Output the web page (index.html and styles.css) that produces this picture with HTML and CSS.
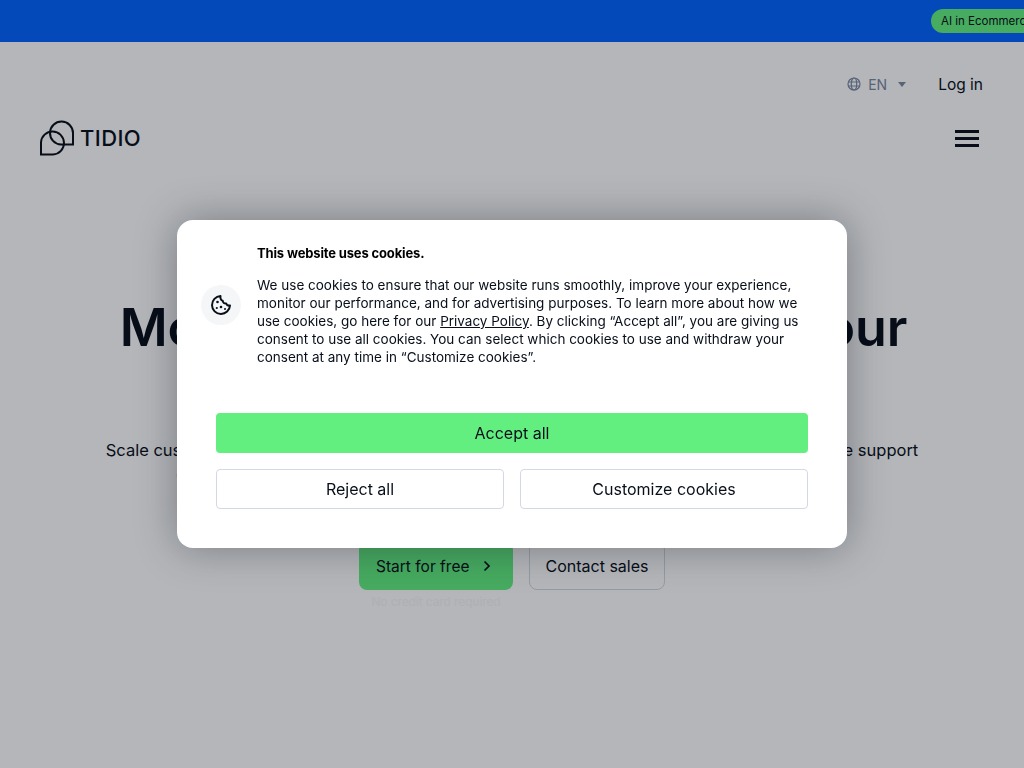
FILE: index.html
```html
<!DOCTYPE html>
<html lang="en">
<head>
<meta charset="utf-8">
<title>Tidio</title>
<link rel="stylesheet" href="styles.css">
</head>
<body>
<div class="page">
  <div class="topbar"><span class="pill">AI in Ecommerce Report 2025</span></div>
  <div class="utility">
    <span class="lang">
      <svg class="globe" width="14" height="14" viewBox="0 0 14 14" fill="none" stroke="currentColor" stroke-width="1.2"><circle cx="7" cy="7" r="6"/><ellipse cx="7" cy="7" rx="2.7" ry="6"/><path d="M1.2 5h11.6M1.2 9h11.6"/></svg>
      <span class="lang-code">EN</span>
      <span class="caret"></span>
    </span>
    <a class="login">Log in</a>
  </div>
  <header class="nav">
    <span class="logo">
      <svg width="35" height="36" viewBox="0 0 35 36" fill="none" stroke="#080f1a" stroke-width="2"><path d="M33 24.500H21A11.500 11.500 0 1 1 33 13Z"/><path d="M1 34.500V22.500A11.500 11.500 0 1 1 13 34.500Z"/></svg>
      <span class="logo-text">TIDIO</span>
    </span>
    <span class="burger"><i></i><i></i><i></i></span>
  </header>
  <main class="hero">
    <h1>More sales, less work with your</h1>
    <p>Scale customer service with AI agents that answer and resolve every request, and give your live support<br>quickly and effortlessly, so your team can focus on growing your business with a plan.</p>
    <div class="cta">
      <div class="start-col">
        <a class="btn-start">Start for free
          <svg width="10" height="12" viewBox="0 0 10 12" fill="none" stroke="currentColor" stroke-width="1.700"><path d="M2.500 1.500 7 6l-4.500 4.500"/></svg>
        </a>
        <div class="note">No credit card required</div>
      </div>
      <a class="btn-contact">Contact sales</a>
    </div>
  </main>
</div>
<div class="overlay">
  <section class="modal">
    <div class="modal-body">
      <span class="cookie">
        <svg width="22" height="22" viewBox="0 0 22 22" fill="none" stroke="#080f1a" stroke-width="2" stroke-linejoin="round"><path d="M10.500 2a9 9 0 1 0 9.500 9.500c-1.800.4-3.300-.4-3.800-2-1.800.3-3.400-.9-3.500-2.700C11 6.500 10 4 10.500 2Z"/><circle cx="7.500" cy="8" r="1.300" fill="#080f1a" stroke="none"/><circle cx="11" cy="13" r="1.300" fill="#080f1a" stroke="none"/><circle cx="6.800" cy="14" r="1.100" fill="#080f1a" stroke="none"/><circle cx="15" cy="15" r="1" fill="#080f1a" stroke="none"/></svg>
      </span>
      <div class="copy">
        <h2>This website uses cookies.</h2>
        <p>We use cookies to ensure that our website runs smoothly, improve your experience, monitor our performance, and for advertising purposes. To learn more about how we use cookies, go here for our <a class="policy">Privacy Policy</a>. By clicking “Accept all”, you are giving us consent to use all cookies. You can select which cookies to use and withdraw your consent at any time in “Customize cookies”.</p>
      </div>
    </div>
    <div class="actions">
      <button class="accept">Accept all</button>
      <div class="secondary">
        <button class="outline">Reject all</button>
        <button class="outline">Customize cookies</button>
      </div>
    </div>
  </section>
</div>
</body>
</html>
```
FILE: styles.css
```css
* { box-sizing: border-box; }
html, body { margin: 0; height: 100%; }
body {
  font-family: "Inter", "Lato", "Liberation Sans", sans-serif;
  color: #080f1a;
  background: #fff;
  overflow: hidden;
}
.page { height: 768px; overflow: hidden; }
.topbar {
  height: 42px;
  background: #0263ff;
  padding: 9px 0 0 931px;
  white-space: nowrap;
  overflow: hidden;
}
.pill {
  display: inline-block;
  height: 24px;
  line-height: 24px;
  padding: 0 12px 0 10px;
  border-radius: 12px 0 0 12px;
  background: #63ef80;
  font-size: 11.500px;
}
.utility {
  display: flex;
  justify-content: flex-end;
  align-items: center;
  height: 24px;
  margin-top: 30px;
  padding-right: 41px;
}
.lang { display: flex; align-items: center; color: #7c88a3; font-size: 14px; }
.globe { margin-right: 7px; }
.caret {
  width: 0; height: 0;
  margin-left: 11px;
  border: 4px solid transparent;
  border-top: 5px solid #7c88a3;
  border-bottom: 0;
}
.login { margin-left: 32px; font-size: 15.500px; }
.nav {
  display: flex;
  justify-content: space-between;
  align-items: center;
  height: 36px;
  margin-top: 24px;
  padding: 0 45px 0 40px;
}
.logo { display: flex; align-items: center; }
.logo-text { margin-left: 5px; font-size: 22px; font-weight: 500; letter-spacing: 0.400px; }
.burger { display: flex; flex-direction: column; gap: 4px; width: 24px; }
.burger i { display: block; height: 3px; background: #080f1a; }
.hero { text-align: center; }
.hero h1 {
  margin: 140px 0 0;
  padding-left: 3px;
  font-size: 52px;
  line-height: 64px;
  font-weight: 600;
  letter-spacing: -0.100px;
  white-space: nowrap;
}
.hero p { margin: 78px 0 0; font-size: 16.500px; line-height: 24px; white-space: nowrap; }
.cta { display: flex; justify-content: center; align-items: flex-start; gap: 16px; margin-top: 56px; }
.start-col { width: 154px; }
.btn-start, .btn-contact {
  display: flex;
  align-items: center;
  height: 48px;
  border-radius: 8px;
  font-size: 16px;
}
.btn-start { padding-left: 17px; gap: 13px; background: #63ef80; font-size: 15.500px; }
.btn-contact { width: 136px; justify-content: center; border: 1px solid #d3d9e2; }
.note { margin-top: 4px; font-size: 11.800px; line-height: 16px; color: #f6f7f8; }
.overlay {
  position: fixed;
  inset: 0;
  background: rgba(8, 12, 22, 0.3);
  display: flex;
  justify-content: center;
  padding-top: 220px;
}
.modal {
  width: 670px;
  height: 328px;
  padding: 24px 39px 39px 24px;
  background: #fff;
  border-radius: 16px;
  box-shadow: 0 0 40px rgba(8, 12, 22, 0.35);
}
.modal-body { display: flex; align-items: center; gap: 16px; }
.cookie {
  display: flex;
  align-items: center;
  justify-content: center;
  flex: none;
  width: 40px;
  height: 40px;
  border-radius: 50%;
  background: #f5f6f8;
}
.copy { flex: 1; }
.copy h2 { margin: 0; font-size: 13px; line-height: 18px; font-weight: 700; letter-spacing: -0.150px; color: #000; }
.copy p { margin: 14px 0 0; font-size: 13.500px; line-height: 18px; }
.policy { text-decoration: underline; }
.actions { margin: 47px 0 0 15px; display: flex; flex-direction: column; gap: 16px; }
button { font: inherit; font-size: 16px; color: #080f1a; height: 40px; border-radius: 4px; }
.accept { border: 0; background: #63ef80; }
.secondary { display: grid; grid-template-columns: 1fr 1fr; gap: 16px; }
.outline { background: #fff; border: 1px solid #d3d9e2; }
```
